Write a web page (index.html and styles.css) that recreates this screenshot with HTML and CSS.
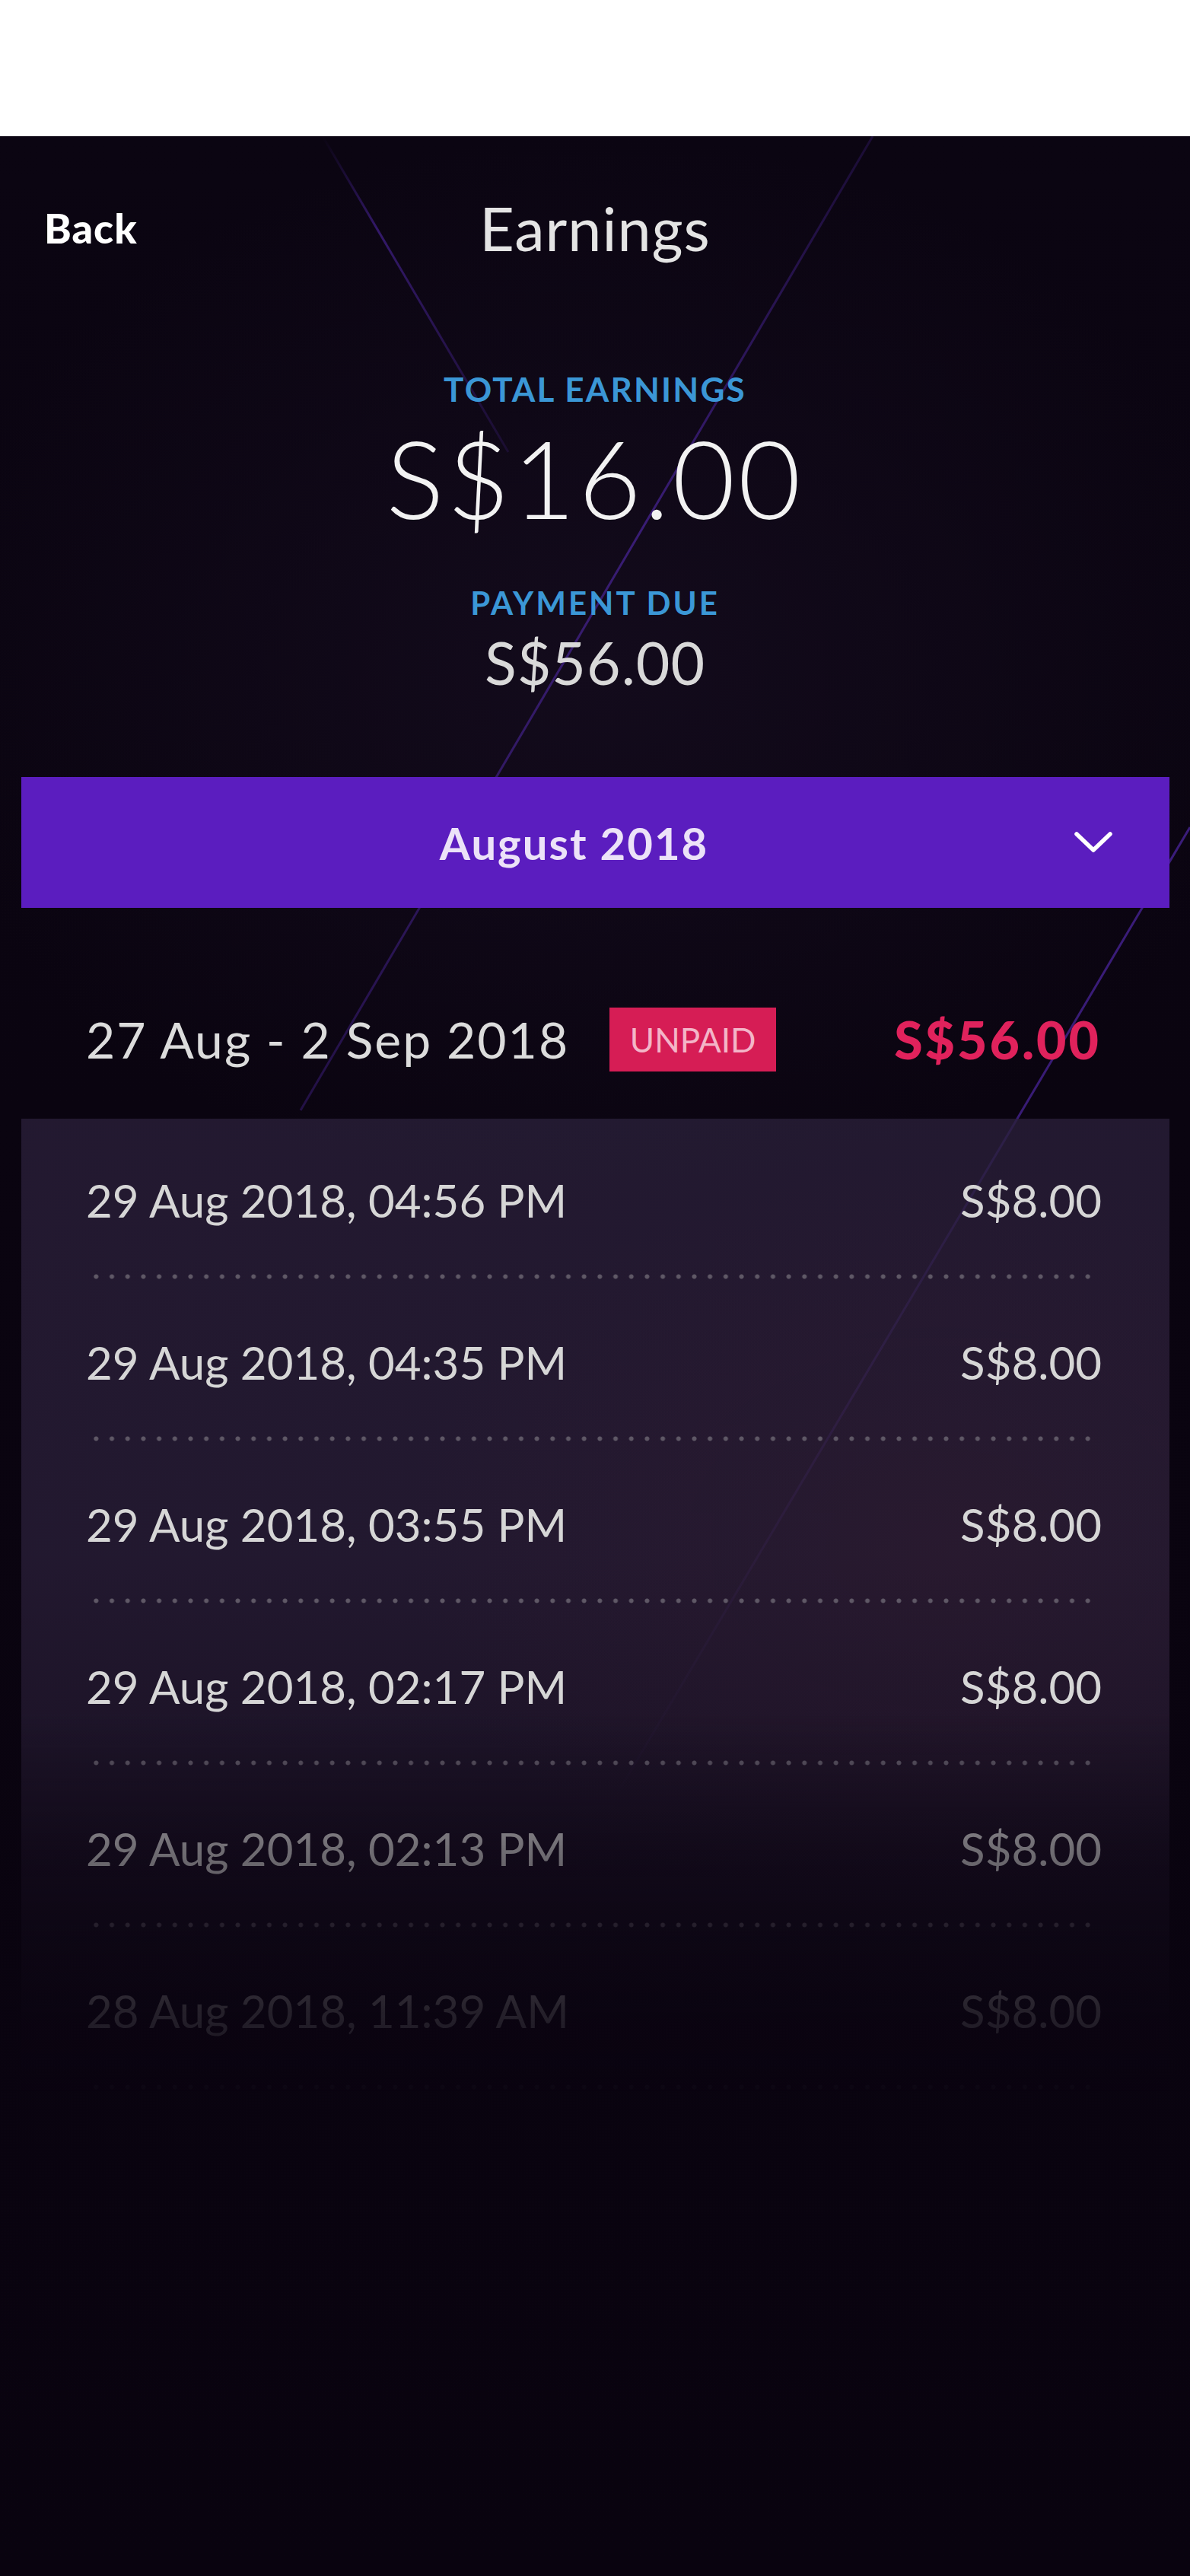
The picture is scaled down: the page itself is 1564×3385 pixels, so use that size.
FILE: index.html
```html
<!DOCTYPE html>
<html lang="en">
<head>
<meta charset="utf-8">
<title>Earnings</title>
<link rel="stylesheet" href="styles.css">
</head>
<body>
<div class="statusbar"></div>
<main class="screen">
  <svg class="deco" width="1564" height="3206" viewBox="0 0 1564 3206" aria-hidden="true">
    <defs>
      <linearGradient id="fadeA" x1="0" y1="0" x2="0" y2="1">
        <stop offset="0" stop-color="#5a2cc0" stop-opacity="0"/>
        <stop offset="0.3" stop-color="#5a2cc0" stop-opacity="0.5"/>
        <stop offset="1" stop-color="#5a2cc0" stop-opacity="0.15"/>
      </linearGradient>
      <linearGradient id="fadeB" x1="0" y1="0" x2="0" y2="1">
        <stop offset="0" stop-color="#5a2cc0" stop-opacity="0.2"/>
        <stop offset="0.4" stop-color="#5a2cc0" stop-opacity="0.55"/>
        <stop offset="1" stop-color="#5a2cc0" stop-opacity="0.3"/>
      </linearGradient>
      <linearGradient id="fadeC" x1="0" y1="0" x2="0" y2="1">
        <stop offset="0" stop-color="#5a2cc0" stop-opacity="0.6"/>
        <stop offset="0.6" stop-color="#5a2cc0" stop-opacity="0.55"/>
        <stop offset="1" stop-color="#5a2cc0" stop-opacity="0"/>
      </linearGradient>
    </defs>
    <line x1="424" y1="0" x2="668" y2="415" stroke="url(#fadeA)" stroke-width="3"/>
    <line x1="1147" y1="0" x2="395" y2="1280" stroke="url(#fadeB)" stroke-width="3"/>
    <line x1="1564" y1="908" x2="810" y2="2180" stroke="url(#fadeC)" stroke-width="3"/>
  </svg>

  <header class="nav">
    <a class="nav-back" href="#">Back</a>
    <h1 class="nav-title">Earnings</h1>
    <span class="nav-spacer"></span>
  </header>

  <section class="summary">
    <div class="summary-label">TOTAL EARNINGS</div>
    <div class="summary-total">S$16.00</div>
    <div class="summary-label summary-label--due">PAYMENT DUE</div>
    <div class="summary-due">S$56.00</div>
  </section>

  <button class="month-bar" type="button">
    <span class="month-label">August 2018</span>
    <svg class="month-chevron" width="52" height="30" viewBox="0 0 52 30" aria-hidden="true">
      <polyline points="4,4 26,25 48,4" fill="none" stroke="#ffffff" stroke-width="5.5" stroke-linecap="round" stroke-linejoin="round"/>
    </svg>
  </button>

  <div class="period">
    <span class="period-range">27 Aug - 2 Sep 2018</span>
    <span class="badge">UNPAID</span>
    <span class="period-amount">S$56.00</span>
  </div>

  <ul class="entries">
    <li class="entry"><span class="entry-date">29 Aug 2018, 04:56 PM</span><span class="entry-amount">S$8.00</span></li>
    <li class="entry"><span class="entry-date">29 Aug 2018, 04:35 PM</span><span class="entry-amount">S$8.00</span></li>
    <li class="entry"><span class="entry-date">29 Aug 2018, 03:55 PM</span><span class="entry-amount">S$8.00</span></li>
    <li class="entry"><span class="entry-date">29 Aug 2018, 02:17 PM</span><span class="entry-amount">S$8.00</span></li>
    <li class="entry"><span class="entry-date">29 Aug 2018, 02:13 PM</span><span class="entry-amount">S$8.00</span></li>
    <li class="entry"><span class="entry-date">28 Aug 2018, 11:39 AM</span><span class="entry-amount">S$8.00</span></li>
  </ul>
</main>
</body>
</html>
```

FILE: styles.css
```css
* { box-sizing: border-box; }

html, body {
  margin: 0;
  padding: 0;
  background: #09030f;
}

body {
  font-family: "Lato", "Liberation Sans", sans-serif;
  color: #e6e6e6;
}

.statusbar {
  height: 179px;
  background: #ffffff;
}

.screen {
  position: relative;
  min-height: 3206px;
  overflow: hidden;
  background:
    radial-gradient(ellipse 900px 700px at 50% 700px, #130b1c 0%, rgba(19, 11, 28, 0) 100%),
    linear-gradient(180deg, #0b0512 0%, #0a0410 40%, #09030f 100%);
}

.deco {
  position: absolute;
  left: 0;
  top: 0;
  pointer-events: none;
  z-index: 0;
}

.nav, .summary, .month-bar, .period, .entries {
  position: relative;
  z-index: 1;
}

/* Nav */
.nav {
  height: 242px;
  display: grid;
  grid-template-columns: 1fr auto 1fr;
  align-items: center;
  padding: 0 58px;
}

.nav-back {
  justify-self: start;
  color: #ffffff;
  text-decoration: none;
  font-weight: 900;
  font-size: 54px;
  line-height: 60px;
  letter-spacing: 1px;
}

.nav-title {
  margin: 0;
  font-weight: 400;
  font-size: 79px;
  line-height: 90px;
  letter-spacing: 1px;
  color: #e4e4e4;
}

/* Summary */
.summary {
  display: flex;
  flex-direction: column;
  align-items: center;
  padding-top: 65px;
}

.summary-label {
  color: #3b97d6;
  font-weight: 700;
  font-size: 44px;
  line-height: 50px;
  letter-spacing: 2.2px;
}

.summary-total {
  margin-top: 16px;
  font-weight: 300;
  font-size: 142px;
  line-height: 150px;
  letter-spacing: 4px;
  color: #f2f2f2;
}

.summary-label--due {
  margin-top: 67px;
  font-size: 42px;
  line-height: 46px;
  letter-spacing: 3px;
}

.summary-due {
  margin-top: 15px;
  font-weight: 400;
  font-size: 77px;
  line-height: 80px;
  letter-spacing: 1px;
  color: #d9d9d9;
}

/* Month selector */
.month-bar {
  display: flex;
  align-items: center;
  width: calc(100% - 55px);
  height: 172px;
  margin: 111px 27px 0 28px;
  padding: 0 74px 0 70px;
  border: 0;
  background: #5b1dbf;
  font-family: inherit;
  cursor: pointer;
}

.month-label {
  flex: 1;
  text-align: center;
  color: #ece2f8;
  font-weight: 700;
  font-size: 58px;
  letter-spacing: 2px;
}

.month-chevron {
  flex: none;
}

/* Period */
.period {
  display: flex;
  align-items: center;
  height: 91px;
  margin-top: 127px;
  margin-bottom: 59px;
  padding: 0 117px 0 113px;
}

.period-range {
  color: #dcdcdc;
  font-size: 66px;
  font-weight: 400;
  letter-spacing: 2px;
}

.badge {
  margin-left: 53px;
  width: 219px;
  height: 84px;
  display: flex;
  align-items: center;
  justify-content: center;
  background: #d61d55;
  color: #f3b5c8;
  font-size: 44px;
  font-weight: 400;
}

.period-amount {
  margin-left: auto;
  color: #e0225c;
  font-size: 68px;
  font-weight: 900;
  letter-spacing: 3px;
}

/* Entries */
.entries {
  list-style: none;
  margin: 0 27px 0 28px;
  padding: 0;
  height: 1278px;
  background:
    radial-gradient(ellipse 700px 500px at 80% 560px, rgba(56, 28, 46, 0.3) 0%, rgba(56, 28, 46, 0) 100%),
    linear-gradient(180deg, rgba(42, 32, 58, 0.78) 0%, rgba(42, 32, 58, 0.76) 45%, rgba(34, 24, 46, 0.76) 70%, rgba(20, 12, 28, 0.76) 100%);
  -webkit-mask-image: linear-gradient(180deg, #000 0, #000 780px, rgba(0,0,0,0.5) 960px, rgba(0,0,0,0.14) 1172px, rgba(0,0,0,0.04) 1278px);
  mask-image: linear-gradient(180deg, #000 0, #000 780px, rgba(0,0,0,0.5) 960px, rgba(0,0,0,0.14) 1172px, rgba(0,0,0,0.04) 1278px);
}

.entry {
  position: relative;
  height: 213px;
  display: flex;
  align-items: center;
  justify-content: space-between;
  padding: 0 89px 0 85px;
  color: #d6d6d6;
  font-size: 60px;
  font-weight: 400;
}

.entry::after {
  content: "";
  position: absolute;
  left: 88px;
  right: 94px;
  bottom: 2px;
  height: 7px;
  background-image: radial-gradient(circle at center, #5f5866 0, #5f5866 2.6px, rgba(95, 88, 102, 0) 3.4px);
  background-size: 20.7px 7px;
  background-repeat: repeat-x;
}
```
